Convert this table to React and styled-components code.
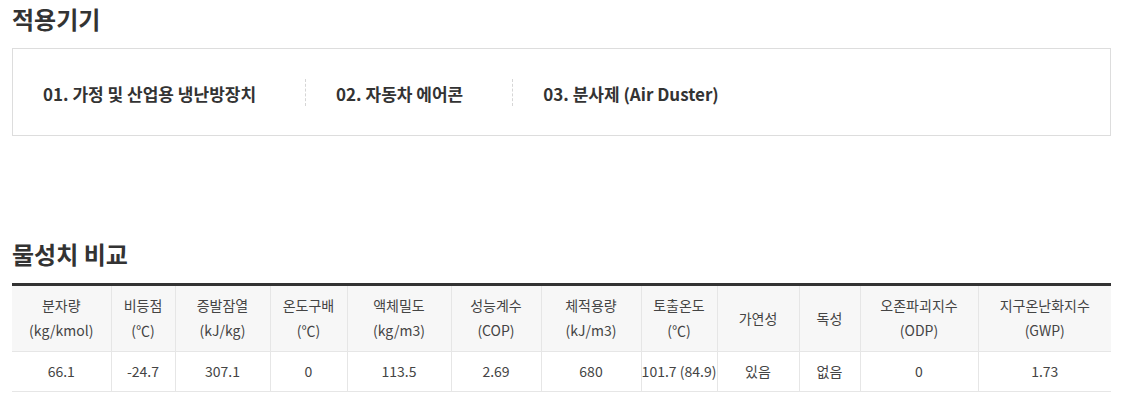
import React from "react";
import styled, { createGlobalStyle } from "styled-components";

const Global = createGlobalStyle`
  html, body { margin: 0; padding: 0; background: #fff; }
  body { font-family: "Noto Sans CJK KR", "Noto Sans", sans-serif; color: #333; }
`;

const Page = styled.div`
  padding: 0 14px 0 12px;
`;

const Title = styled.h2`
  margin: ${(p) => p.$mt || 0}px 0 0;
  font-size: 24px;
  font-weight: 700;
  line-height: 38px;
  color: #333;
`;

const DeviceBox = styled.ul`
  list-style: none;
  margin: 10px 0 0;
  padding: 2px 0 0 30px;
  height: 84px;
  border: 1px solid #ddd;
  display: flex;
  align-items: center;
`;

const DeviceItem = styled.li`
  display: flex;
  align-items: center;
  font-size: 17px;
  font-weight: 700;
  color: #333;
  &:not(:last-child)::after {
    content: "";
    display: block;
    height: 27px;
    border-left: 1px dashed #d6d6d6;
    margin: -2px 30px 0 49px;
  }
`;

const Table = styled.table`
  margin-top: 10px;
  width: 100%;
  border-collapse: collapse;
  table-layout: fixed;
  border-top: 3px solid #333;
`;

const Col = styled.col`
  width: ${(p) => p.$w}px;
`;

const Th = styled.th`
  background: #f7f7f7;
  font-weight: 400;
  font-size: 14px;
  line-height: 25px;
  color: #444;
  padding: 7px 0 8px;
  text-align: center;
  border-bottom: 1px solid #e6e6e6;
  & + & { border-left: 1px solid #e6e6e6; }
  span { display: block; }
`;

const Td = styled.td`
  font-size: 14px;
  line-height: 25px;
  color: #444;
  padding: 7px 0 7px;
  text-align: center;
  border-bottom: 1px solid #e6e6e6;
  white-space: nowrap;
  & + & { border-left: 1px solid #e6e6e6; }
`;

const cols = [
  { w: 99, l: ["분자량", "(kg/kmol)"], v: "66.1" },
  { w: 64, l: ["비등점", "(℃)"], v: "-24.7" },
  { w: 95, l: ["증발잠열", "(kJ/kg)"], v: "307.1" },
  { w: 77, l: ["온도구배", "(℃)"], v: "0" },
  { w: 104, l: ["액체밀도", "(kg/m3)"], v: "113.5" },
  { w: 90, l: ["성능계수", "(COP)"], v: "2.69" },
  { w: 100, l: ["체적용량", "(kJ/m3)"], v: "680" },
  { w: 76, l: ["토출온도", "(℃)"], v: "101.7 (84.9)" },
  { w: 82, l: ["가연성"], v: "있음" },
  { w: 61, l: ["독성"], v: "없음" },
  { w: 118, l: ["오존파괴지수", "(ODP)"], v: "0" },
  { w: 133, l: ["지구온난화지수", "(GWP)"], v: "1.73" },
];

export default function App() {
  return (
    <Page>
      <Global />
      <Title>적용기기</Title>
      <DeviceBox>
        <DeviceItem>01. 가정 및 산업용 냉난방장치</DeviceItem>
        <DeviceItem>02. 자동차 에어콘</DeviceItem>
        <DeviceItem>03. 분사제 (Air Duster)</DeviceItem>
      </DeviceBox>
      <Title $mt={99}>물성치 비교</Title>
      <Table>
        <colgroup>
          {cols.map((c, i) => (
            <Col key={i} $w={c.w} />
          ))}
        </colgroup>
        <thead>
          <tr>
            {cols.map((c, i) => (
              <Th key={i}>
                {c.l.map((t, j) => (
                  <span key={j}>{t}</span>
                ))}
              </Th>
            ))}
          </tr>
        </thead>
        <tbody>
          <tr>
            {cols.map((c, i) => (
              <Td key={i}>{c.v}</Td>
            ))}
          </tr>
        </tbody>
      </Table>
    </Page>
  );
}
